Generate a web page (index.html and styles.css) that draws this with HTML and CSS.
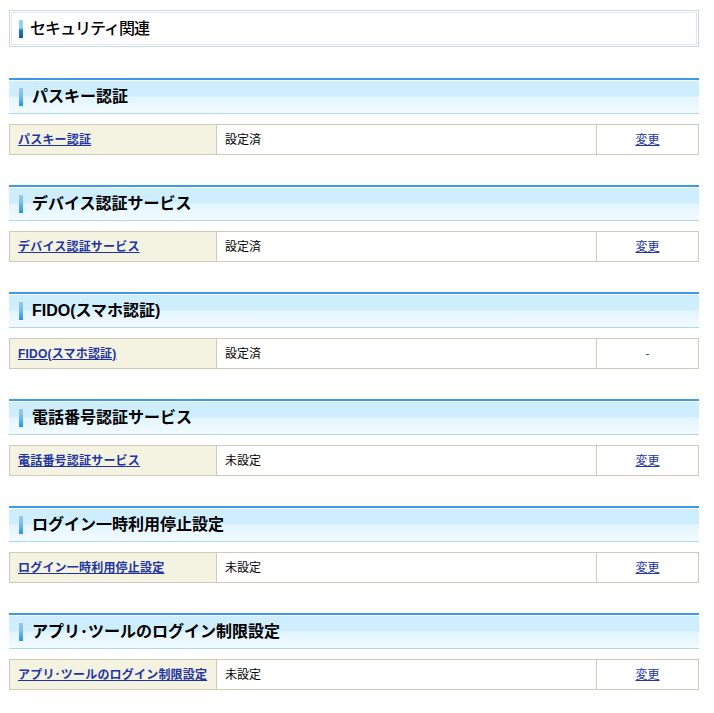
FILE: index.html
```html
<!DOCTYPE html>
<html lang="ja">
<head>
<meta charset="utf-8">
<link rel="stylesheet" href="styles.css">
</head>
<body>
<div class="page">
  <div class="title-box"><div class="title-inner"><span class="title-icon"></span><h1 class="title">セキュリティ関連</h1></div></div>

  <section class="sec">
    <h2 class="sec-head"><span class="sec-icon"></span>パスキー認証</h2>
    <table class="tbl"><tr><th class="c1"><a href="#">パスキー認証</a></th><td class="c2">設定済</td><td class="c3"><a href="#">変更</a></td></tr></table>
  </section>

  <section class="sec">
    <h2 class="sec-head"><span class="sec-icon"></span>デバイス認証サービス</h2>
    <table class="tbl"><tr><th class="c1"><a href="#">デバイス認証サービス</a></th><td class="c2">設定済</td><td class="c3"><a href="#">変更</a></td></tr></table>
  </section>

  <section class="sec">
    <h2 class="sec-head"><span class="sec-icon"></span>FIDO(スマホ認証)</h2>
    <table class="tbl"><tr><th class="c1"><a href="#">FIDO(スマホ認証)</a></th><td class="c2">設定済</td><td class="c3"><span class="dash">-</span></td></tr></table>
  </section>

  <section class="sec">
    <h2 class="sec-head"><span class="sec-icon"></span>電話番号認証サービス</h2>
    <table class="tbl"><tr><th class="c1"><a href="#">電話番号認証サービス</a></th><td class="c2">未設定</td><td class="c3"><a href="#">変更</a></td></tr></table>
  </section>

  <section class="sec">
    <h2 class="sec-head"><span class="sec-icon"></span>ログイン一時利用停止設定</h2>
    <table class="tbl"><tr><th class="c1"><a href="#">ログイン一時利用停止設定</a></th><td class="c2">未設定</td><td class="c3"><a href="#">変更</a></td></tr></table>
  </section>

  <section class="sec">
    <h2 class="sec-head"><span class="sec-icon"></span>アプリ･ツールのログイン制限設定</h2>
    <table class="tbl"><tr><th class="c1"><a href="#">アプリ･ツールのログイン制限設定</a></th><td class="c2">未設定</td><td class="c3"><a href="#">変更</a></td></tr></table>
  </section>
</div>
</body>
</html>
```

FILE: styles.css
```css
html, body {
  margin: 0;
  padding: 0;
  background: #ffffff;
}
body {
  font-family: "Liberation Sans", "Noto Sans CJK JP", sans-serif;
  color: #000000;
}
.page {
  width: 690px;
  padding: 10px 0 0 9px;
}
.title-box {
  height: 37px;
  box-sizing: border-box;
  border: 1px solid #c6d7ea;
  padding: 1px;
  margin-bottom: 31px;
}
.title-inner {
  height: 100%;
  box-sizing: border-box;
  border: 1px solid #e3e8ef;
  display: flex;
  align-items: center;
  padding-left: 7px;
}
.title-icon {
  width: 4px;
  height: 18px;
  background: linear-gradient(#8fd2f4 0%, #8fd2f4 45%, #2a80c0 55%, #0c5a98 100%);
  margin-right: 7px;
  margin-top: 1px;
}
.title {
  margin: 0;
  font-size: 16px;
  font-weight: 500;
  line-height: 20px;
  letter-spacing: -1px;
}
.sec {
  margin-bottom: 30px;
}
.sec-head {
  margin: 0;
  height: 36px;
  box-sizing: border-box;
  border-top: 2px solid #3d9ae6;
  border-bottom: 1px solid #a9d9ef;
  background: linear-gradient(#ffffff 0px, #ffffff 1px, #cfeefd 1px, #cfeefd 16px, #e3f5fe 17px, #f2fbff 100%);
  display: flex;
  align-items: center;
  padding-left: 10px;
  font-size: 16px;
  font-weight: bold;
  line-height: 20px;
}
.sec-icon {
  width: 4px;
  height: 18px;
  background: linear-gradient(#a3c6dc 0%, #7dc0ea 40%, #2296e6 100%);
  margin-right: 9px;
  margin-top: 1px;
}
.tbl {
  margin-top: 10px;
  width: 690px;
  border-collapse: collapse;
  table-layout: fixed;
}
.tbl th, .tbl td {
  border: 1px solid #cecbb9;
  height: 29px;
  padding: 0 8px;
  font-size: 12px;
  line-height: 14px;
  vertical-align: middle;
}
.c1 {
  width: 190px;
  background: #f4f3e1;
  text-align: left;
  font-weight: bold;
  letter-spacing: 0.2px;
}
.c2 {
  width: 363px;
  background: #ffffff;
}
.c3 {
  text-align: center;
  background: #ffffff;
}
.tbl a {
  color: #2234a2;
  text-decoration: underline;
}
.c3 a {
  font-weight: normal;
}
.dash {
  color: #1c5aa8;
}
```
